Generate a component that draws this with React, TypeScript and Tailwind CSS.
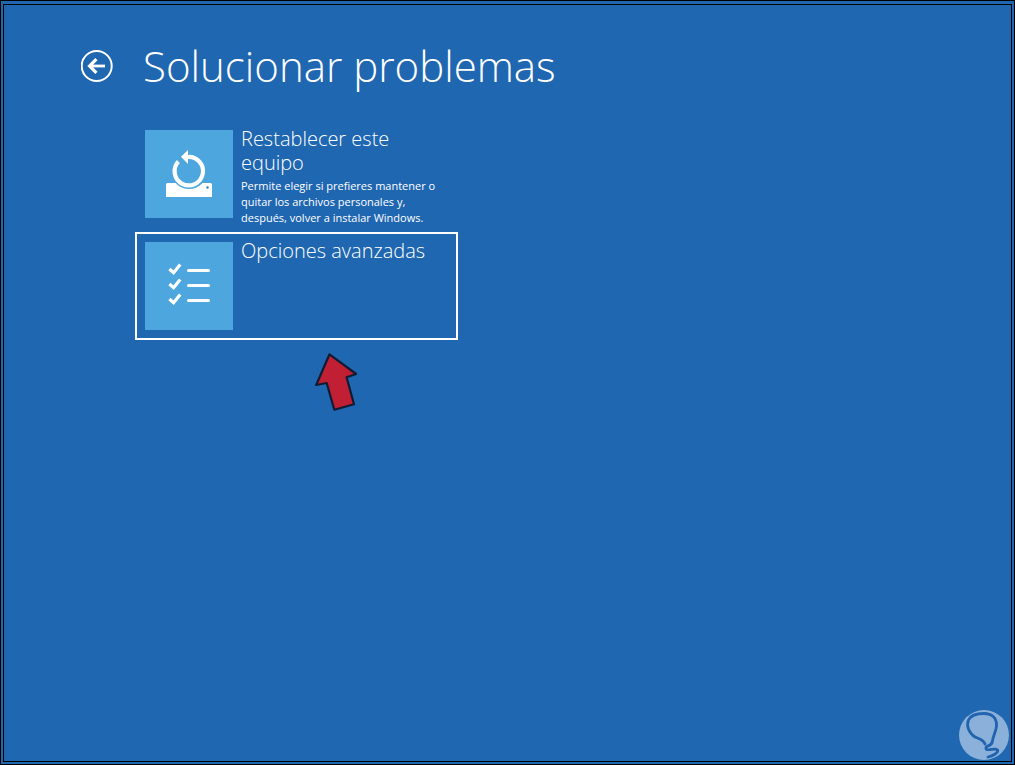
import React, { useState } from 'react';

interface Option {
  id: string;
  title: string;
  description?: string;
  icon: React.ReactNode;
}

const BackIcon = () => (
  <svg viewBox="0 0 32 32" className="h-8 w-8" fill="none" stroke="currentColor">
    <circle cx="15.7" cy="16" r="15" strokeWidth="2" />
    <path d="M24 16H9" strokeWidth="2.8" />
    <path d="M15.4 9.2L8.6 16l6.8 6.8" strokeWidth="3.2" />
  </svg>
);

const ResetIcon = () => (
  <svg viewBox="0 0 88 88" className="h-full w-full" aria-hidden="true">
    <path d="M22.5 53h43q1.5 0 1.5 1.5V67H21V54.5q0-1.5 1.5-1.5z" fill="#fff" />
    <circle cx="44" cy="41" r="18" fill="#4da6dd" />
    <path d="M43 27A14.2 14.2 0 1 1 33.4 31.5" fill="none" stroke="#fff" strokeWidth="4.2" />
    <path d="M36 26.8L43 20v14z" fill="#fff" />
    <circle cx="62.5" cy="57.5" r="1.2" fill="#2f7fc0" />
  </svg>
);

const ChecklistIcon = () => (
  <svg viewBox="0 0 88 88" className="h-full w-full" aria-hidden="true" fill="none" stroke="#fff">
    {[28, 43, 58].map((y) => (
      <g key={y} transform={`translate(0 ${y})`}>
        <path d="M24.4 -1l4.2 3.8 6.6 -8.2" strokeWidth="3.2" />
        <path d="M43.5 .5h20" strokeWidth="3" strokeLinecap="round" />
      </g>
    ))}
  </svg>
);

const PointerArrow = () => (
  <svg viewBox="0 0 44 60" className="h-15 w-11" aria-hidden="true">
    <path
      d="M16.5 2.3L43.2 22L33.6 25.2L41 52.3L21.3 57.7L13.7 31L3.2 33z"
      fill="#c01f34"
      stroke="#101c33"
      strokeWidth="2.2"
      strokeLinejoin="round"
    />
  </svg>
);

const BulbMark = () => (
  <svg viewBox="0 0 50 50" className="h-[50px] w-[50px]" aria-hidden="true">
    <circle cx="25" cy="25" r="25" fill="#8bb0d9" />
    <path
      d="M26 34C24 29 20 29 16 27C10 23 7 16 9.5 10C12 4.5 19 3.5 25 3.5C33 3.5 38 8 37.5 16C37 22 34 26 33.5 31C33 37 26 35 27 38.5C28 42 36 37 38.5 40C40 43 33 46 29 47"
      fill="none"
      stroke="#2064af"
      strokeWidth="2.8"
      strokeLinecap="round"
    />
  </svg>
);

const options: Option[] = [
  {
    id: 'reset',
    title: 'Restablecer este equipo',
    description: 'Permite elegir si prefieres mantener o quitar los archivos personales y, después, volver a instalar Windows.',
    icon: <ResetIcon />,
  },
  {
    id: 'advanced',
    title: 'Opciones avanzadas',
    icon: <ChecklistIcon />,
  },
];

export default function App() {
  const [selected, setSelected] = useState('advanced');

  return (
    <div className="flex min-h-screen border border-black bg-[#1f67b1] px-0.5 pt-[3px] pb-0.5 font-['Open_Sans','Noto_Sans',sans-serif] text-white">
      <main className="relative flex-1 border border-black px-[77px] pt-[31px]">
        <header className="flex items-center gap-[30px]">
          <button type="button" aria-label="Atrás" className="h-8 w-8 shrink-0">
            <BackIcon />
          </button>
          <h1 className="text-[42px] leading-[60px] font-light">Solucionar problemas</h1>
        </header>

        <ul className="mt-6 ml-[54px] w-[323px] space-y-1">
          {options.map((option) => (
            <li key={option.id} className="relative">
              <button
                type="button"
                onClick={() => setSelected(option.id)}
                className={`flex w-full items-start gap-2 border-2 p-2 text-left ${
                  selected === option.id ? 'border-white' : 'border-transparent'
                }`}
              >
                <span className="h-[88px] w-[88px] shrink-0 bg-[#4da6dd]">{option.icon}</span>
                <span className="-mt-[3px] -mb-2 flex w-[200px] flex-col gap-[3px]">
                  <span className="text-xl leading-6 font-light">{option.title}</span>
                  {option.description && <span className="text-[11px] leading-4">{option.description}</span>}
                </span>
              </button>
              {/* Arrow under the highlighted option */}
              {selected === option.id && (
                <span className="pointer-events-none absolute top-full left-[178px] mt-3">
                  <PointerArrow />
                </span>
              )}
            </li>
          ))}
        </ul>

        <div className="absolute right-0.5 bottom-px">
          <BulbMark />
        </div>
      </main>
    </div>
  );
}
